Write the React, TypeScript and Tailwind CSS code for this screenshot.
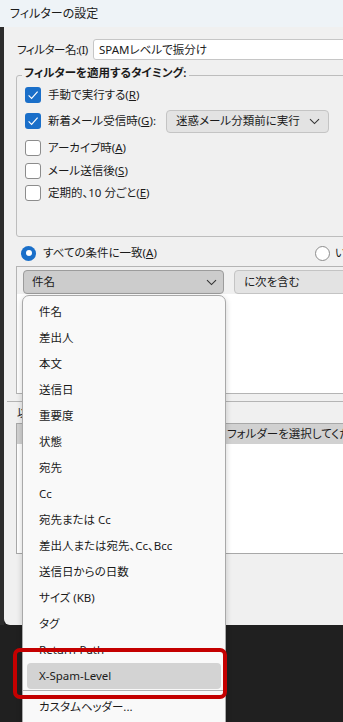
import React from "react";

const MENU_ITEMS = [
  "件名",
  "差出人",
  "本文",
  "送信日",
  "重要度",
  "状態",
  "宛先",
  "Cc",
  "宛先または Cc",
  "差出人または宛先、Cc、Bcc",
  "送信日からの日数",
  "サイズ (KB)",
  "タグ",
  "Return-Path",
  "X-Spam-Level",
];

function Chevron() {
  return (
    <svg width="11" height="7" viewBox="0 0 11 7" className="shrink-0">
      <path d="M1 1.2 L5.5 5.6 L10 1.2" fill="none" stroke="#333" strokeWidth="1.1" />
    </svg>
  );
}

function Checkbox({ checked }: { checked?: boolean }) {
  if (checked) {
    return (
      <span className="w-[16px] h-[16px] rounded-[3px] bg-[#1a6fc9] flex items-center justify-center shrink-0">
        <svg width="12" height="12" viewBox="0 0 12 12">
          <path d="M1.6 6.4 L4.6 9.3 L10.6 2.6" fill="none" stroke="white" strokeWidth="1.15" />
        </svg>
      </span>
    );
  }
  return <span className="w-[16px] h-[16px] rounded-[3px] bg-white border border-[#8c8c8c] shrink-0" />;
}

function CheckRow({ label, keyChar, suffix, checked, h = "h-[22px]", children }: {
  label: string;
  keyChar: string;
  suffix?: string;
  checked?: boolean;
  h?: string;
  children?: React.ReactNode;
}) {
  return (
    <div className={`flex items-center ${h}`}>
      <Checkbox checked={checked} />
      <span className="ml-[7px] whitespace-nowrap shrink-0">
        {label}(<u>{keyChar}</u>){suffix}
      </span>
      {children}
    </div>
  );
}

export default function App() {
  return (
    <div className="relative w-[343px] h-[722px] overflow-hidden bg-[#202020] text-[11.5px] text-[#1b1b1b] font-['Noto_Sans','Noto_Sans_CJK_JP',sans-serif] [font-feature-settings:'palt']">
      {/* Title bar */}
      <div className="h-[27px] bg-[#eef3f7] flex items-center pl-[10px] leading-none text-[12px]">フィルターの設定</div>

      <div className="flex">
        <div className="w-[4px] h-[598px] bg-[#2c2c2c] shrink-0" />
        <div className="flex-1 h-[598px] bg-[#f0f0f0] rounded-bl-[6px] overflow-hidden">
          <div className="w-[600px] pl-[12px]">
            {/* Filter name */}
            <div className="mt-[12px] flex items-center h-[21px]">
              <span className="w-[77px] shrink-0 pl-[1px] whitespace-nowrap tracking-[-0.5px]">フィルター名:(I)</span>
              <div className="flex-1 h-[21px] bg-white border border-[#c6c6c6] rounded-[3px] flex items-center pl-[5px]">
                SPAMレベルで振分け
              </div>
            </div>

            {/* Timing group */}
            <div className="mt-[15px] h-[162px] border border-[#bdbdbd] rounded-[3px] pl-[8px]">
              <div className="-mt-[12px] -ml-[3px] w-fit bg-[#f0f0f0] px-[2px] leading-[17px] font-semibold">
                フィルターを適用するタイミング:
              </div>
              <div className="mt-[3px] flex flex-col">
                <CheckRow label="手動で実行する" keyChar="R" checked />
                <div className="mt-[3px]">
                  <CheckRow label="新着メール受信時" keyChar="G" suffix=":" checked h="h-[24px]">
                    <div className="ml-[10px] shrink-0 h-[23px] bg-[#e3e3e3] border border-[#c4c4c4] rounded-[4px] flex items-center gap-[9px] pl-[9px] pr-[8px]">
                      <span className="whitespace-nowrap">迷惑メール分類前に実行</span>
                      <Chevron />
                    </div>
                  </CheckRow>
                </div>
                <div className="mt-[4px]">
                  <CheckRow label="アーカイブ時" keyChar="A" />
                </div>
                <div className="mt-[1px]">
                  <CheckRow label="メール送信後" keyChar="S" />
                </div>
                <CheckRow label="定期的、10 分ごと" keyChar="E" />
              </div>
            </div>

            {/* Match radios */}
            <div className="mt-[5px] h-[22px] flex items-center pl-[5px]">
              <div className="w-[294px] shrink-0 flex items-center">
                <span className="w-[15px] h-[15px] rounded-full bg-[#1a6fc9] flex items-center justify-center shrink-0">
                  <span className="w-[6px] h-[6px] rounded-full bg-white" />
                </span>
                <span className="ml-[7px] whitespace-nowrap">
                  すべての条件に一致(<u>A</u>)
                </span>
              </div>
              <span className="w-[15px] h-[15px] rounded-full bg-white border border-[#8c8c8c] shrink-0" />
              <span className="ml-[5px] whitespace-nowrap">いずれかの条件に一致(N)</span>
            </div>

            {/* Conditions panel */}
            <div className="mt-[2px] border-t border-l border-b border-[#b4b4b4]">
              <div className="h-[27px] pt-[3px] pl-[6px] flex gap-[10px]">
                <div className="w-[201px] shrink-0 h-[24px] bg-[#cccccc] border border-[#9c9c9c] rounded-[4px] flex items-center justify-between pl-[8px] pr-[6px]">
                  <span>件名</span>
                  <Chevron />
                </div>
                <div className="w-[200px] shrink-0 h-[24px] bg-[#e3e3e3] border border-[#c4c4c4] rounded-[4px] flex items-center pl-[9px]">
                  に次を含む
                </div>
              </div>
              <div className="h-[99px] bg-white" />
            </div>

            {/* Splitter */}
            <div className="mt-[7px] -ml-[9px] border-t border-[#b4b4b4]" />

            {/* Folder section */}
            <div className="h-[21px] flex items-center pl-[1px] whitespace-nowrap">以下のフォルダーに移動(M):</div>
            <div className="border-t border-l border-b border-[#a8a8a8] bg-white h-[131px]">
              <div className="h-[20px] bg-[#d1d1d1] flex items-center pl-[210px] whitespace-nowrap">
                フォルダーを選択してください
              </div>
            </div>
          </div>
        </div>
      </div>

      {/* Open dropdown menu */}
      <div className="absolute left-[22px] top-[295px] w-[204px] h-[440px] bg-[#f9f9f9] border border-[#a9a9a9] rounded-t-[7px] shadow-[0_2px_6px_rgba(0,0,0,0.18)] pt-[3px] px-[4px]">
        {MENU_ITEMS.map((item) => (
          <div
            key={item}
            className={`h-[26px] flex items-center pl-[12px] rounded-[4px] whitespace-nowrap ${item === "X-Spam-Level" ? "bg-[#d3d3d3]" : ""}`}
          >
            {item}
          </div>
        ))}
        <div className="mt-[1px] mb-[3px] -mx-[4px] border-t border-[#b0b0b0]" />
        <div className="h-[26px] flex items-center pl-[12px] whitespace-nowrap">カスタムヘッダー...</div>
      </div>

      {/* Highlight frame */}
      <div className="absolute left-[13px] top-[648px] w-[214px] h-[51px] border-[4px] border-[#c40000] rounded-[7px]" />
    </div>
  );
}
